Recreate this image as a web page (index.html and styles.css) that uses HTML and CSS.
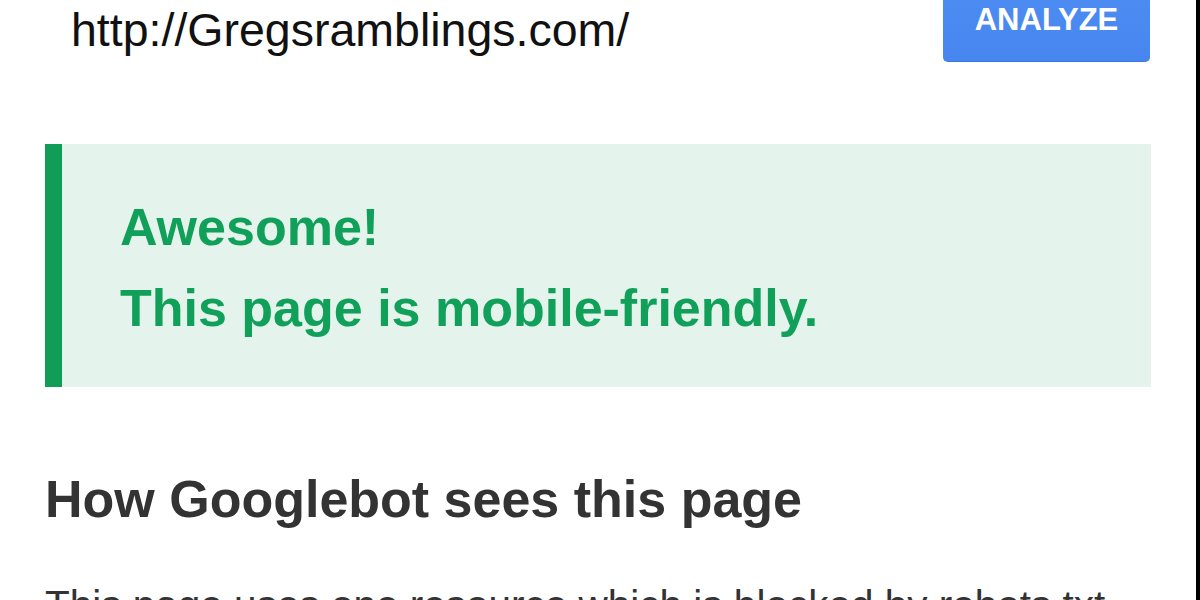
FILE: index.html
```html
<!DOCTYPE html>
<html lang="en">
<head>
<meta charset="utf-8">
<title>Mobile-Friendly Test</title>
<link rel="stylesheet" href="styles.css">
</head>
<body>
<div class="page">
  <div class="search-row">
    <div class="url">http://Gregsramblings.com/</div>
    <button class="analyze">ANALYZE</button>
  </div>
  <div class="result">
    <div class="result-line">Awesome!</div>
    <div class="result-line">This page is mobile-friendly.</div>
  </div>
  <h2 class="section-title">How Googlebot sees this page</h2>
  <p class="section-text">This page uses one resource which is blocked by robots.txt</p>
</div>
</body>
</html>
```
FILE: styles.css
```css
html, body {
  margin: 0;
  padding: 0;
  background: #ffffff;
}

body {
  font-family: "Liberation Sans", Arial, sans-serif;
  width: 1200px;
  height: 600px;
  overflow: hidden;
}

.page {
  box-sizing: border-box;
  width: 1200px;
  height: 600px;
  border-right: 4px solid #000;
  overflow: hidden;
}

.search-row {
  display: flex;
  justify-content: space-between;
  align-items: flex-start;
  height: 62px;
  padding-right: 46px;
}

.url {
  margin: 7px 0 0 71px;
  font-size: 46.5px;
  line-height: 47px;
  color: #111;
  white-space: nowrap;
}

.analyze {
  box-sizing: border-box;
  width: 207px;
  height: 62px;
  padding: 0 0 23px;
  border: none;
  border-bottom: 1px solid #3b77dc;
  border-radius: 0 0 5px 5px;
  background: linear-gradient(#4c8bf2, #4686ee);
  color: #fff;
  font-family: "Liberation Sans", Arial, sans-serif;
  font-weight: bold;
  font-size: 31px;
  line-height: 31px;
  text-align: center;
  vertical-align: top;
}

.result {
  box-sizing: border-box;
  margin: 82px 0 0 45px;
  width: 1106px;
  height: 243px;
  padding: 43px 0 0 58px;
  border-left: 17px solid #0f9d58;
  background: #e4f4ec;
}

.result-line {
  font-weight: bold;
  font-size: 52px;
  line-height: 81px;
  color: #11a05a;
  white-space: nowrap;
}

.section-title {
  margin: 82px 0 0 45px;
  font-size: 52px;
  line-height: 61px;
  font-weight: bold;
  color: #333;
  white-space: nowrap;
}

.section-text {
  margin: 51px 0 0 45px;
  font-size: 40.5px;
  line-height: 48.6px;
  color: #333;
  white-space: nowrap;
}
```
